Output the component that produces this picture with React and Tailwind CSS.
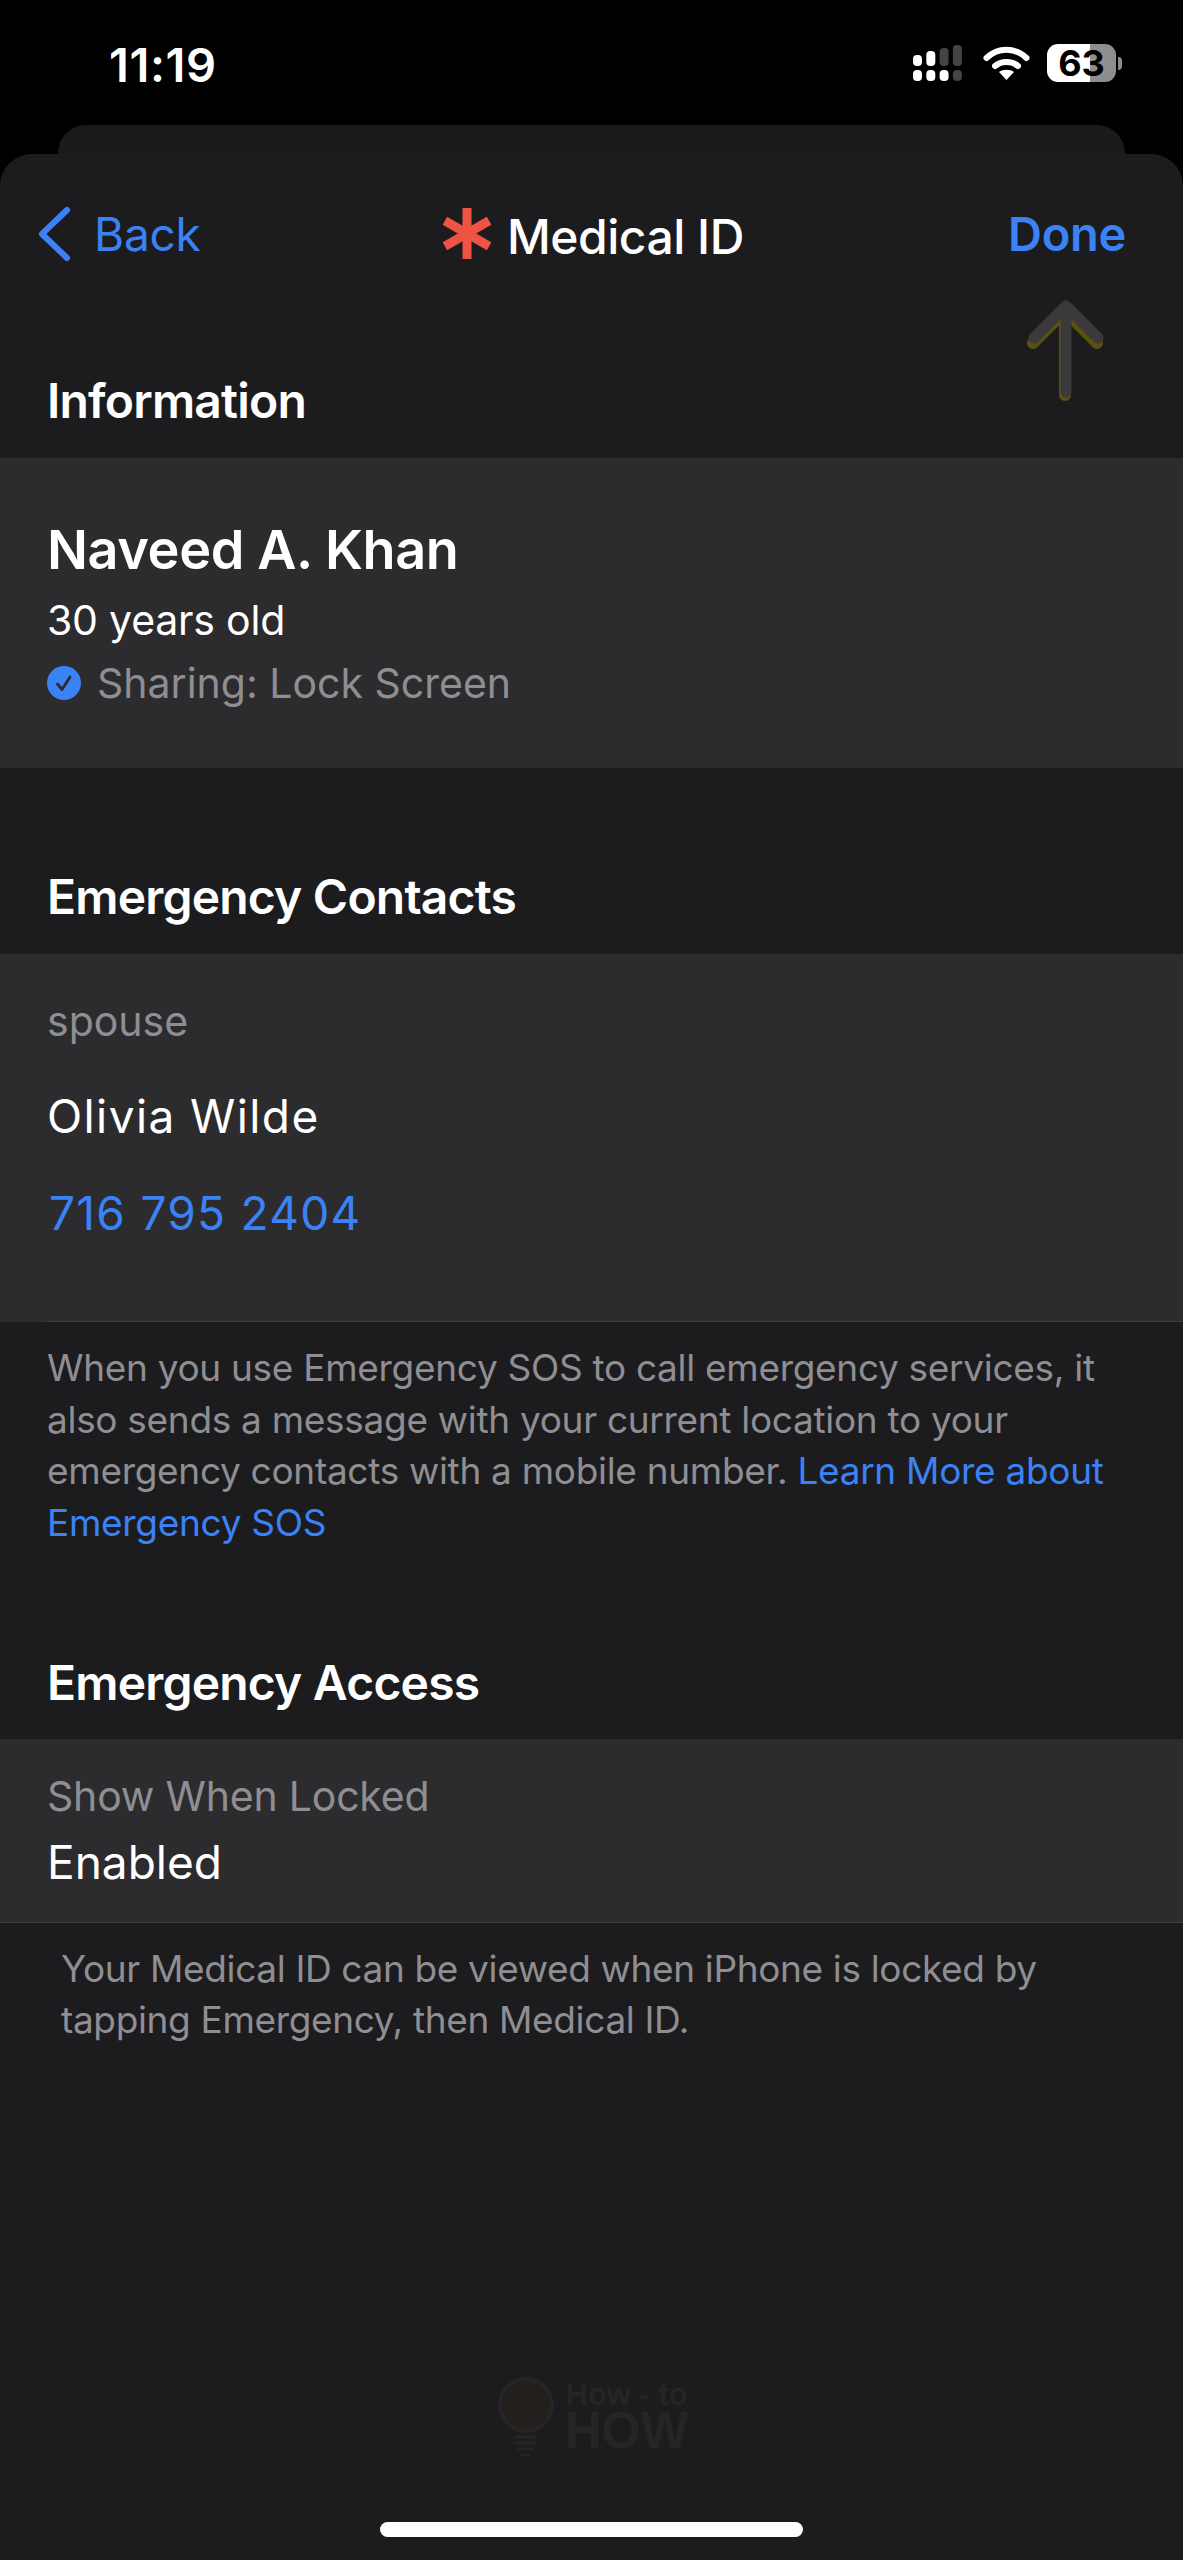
const FONT = "font-['Inter','Liberation_Sans',sans-serif]";

const StatusBar = () => (
  <div className="h-[125px] bg-black flex items-start justify-between pl-[109px] pr-[61px] pt-[40px] shrink-0">
    <span className="text-white text-[47px] leading-[50px] font-semibold tracking-[0.6px]">11:19</span>
    <div className="flex items-center pt-[4px]">
      <svg width="50" height="36" viewBox="0 0 50 36">
        {[0, 1].map((row) =>
          [0, 1, 2, 3].map((col) => {
            const dim = (col === 2 && row === 0) || col === 3;
            const h = row === 0 ? [11, 15, 18, 21][col] : 11;
            const y = row === 0 ? 21 - h : 25;
            return <rect key={`${row}-${col}`} x={col * 13.3} y={y} width="9" height={h} rx="4" fill={dim ? "#444446" : "#fff"} />;
          })
        )}
      </svg>
      <svg className="ml-[20px]" width="47" height="34" viewBox="0 0 47 34" fill="none">
        <path d="M3.5 12C15 1 32 1 43.5 12" stroke="#fff" strokeWidth="6" strokeLinecap="round" />
        <path d="M12 20C18 14.500 29 14.500 35 20" stroke="#fff" strokeWidth="6" strokeLinecap="round" />
        <path d="M23.500 34L16 26C20 23 27 23 31 26Z" fill="#fff" />
      </svg>
      <div className="flex items-center gap-[2px] ml-[17px]">
        <div className="w-[69px] h-[38px] rounded-[11px] bg-[linear-gradient(90deg,#fff_0,#fff_63%,#8e8e90_63%,#8e8e90_100%)] flex items-center justify-center text-black text-[36px] font-bold leading-none">
          63
        </div>
        <div className="w-[4px] h-[13px] rounded-r-full bg-[#8e8e90]" />
      </div>
    </div>
  </div>
);

const SectionTitle = ({ children }) => (
  <h2 className="text-white text-[48px] leading-[52px] font-semibold pl-[47px] tracking-[-0.8px]">{children}</h2>
);

const App = () => {
  return (
    <div className={`w-[1183px] h-[2560px] bg-black overflow-hidden flex flex-col ${FONT}`}>
      <StatusBar />
      <div className="mx-[58px] h-[29px] bg-[#1a1a1c] rounded-t-[28px] shrink-0" />
      <div className="relative flex-1 bg-[#1c1c1e] rounded-t-[32px] flex flex-col">
        <div className="relative h-[150px] flex items-start justify-between pt-[52px] pl-[36px] pr-[57px]">
          <div className="flex items-center gap-[22px] text-[#3b82f6] h-[56px]">
            <svg width="36" height="56" viewBox="0 0 36 56" fill="none">
              <path d="M31 4L6 28L31 52" stroke="#3b82f6" strokeWidth="6" strokeLinecap="round" strokeLinejoin="round" />
            </svg>
            <span className="text-[46px] leading-[56px] tracking-[-0.2px]">Back</span>
          </div>
          <div className="absolute left-[441px] top-[55px] flex items-center gap-[14px]">
            <svg className="-mt-[7px]" width="52" height="51" viewBox="0 0 52 51" fill="#ef5343">
              <rect x="21.500" y="0" width="9" height="51" />
              <rect x="21.500" y="0" width="9" height="51" transform="rotate(60 26 25.500)" />
              <rect x="21.500" y="0" width="9" height="51" transform="rotate(-60 26 25.500)" />
            </svg>
            <span className="text-white text-[48px] leading-[56px] font-medium tracking-[-0.5px]">Medical ID</span>
          </div>
          <span className="text-[#3b82f6] text-[47px] leading-[56px] font-semibold tracking-[-0.3px]">Done</span>
        </div>

        <svg className="absolute left-[1025px] top-[146px]" width="82" height="106" viewBox="0 0 82 106" fill="none">
          <path d="M9 40L41 8L73 40M41 8V92" stroke="#5a5012" strokeWidth="12" strokeLinecap="round" strokeLinejoin="round" transform="translate(-1 3)" />
          <path d="M9 38L41 6L73 38M41 6V92" stroke="#3a3a3c" strokeWidth="11" strokeLinecap="round" strokeLinejoin="round" />
        </svg>

        <div className="pt-[71px]">
          <SectionTitle>Information</SectionTitle>
        </div>
        <section className="mt-[31px] h-[310px] bg-[#2c2c2e] pl-[47px] pt-[61px]">
          <p className="text-white text-[54px] leading-[62px] font-semibold tracking-[-0.4px]">Naveed A. Khan</p>
          <p className="text-white text-[41px] leading-[50px] mt-[14px] tracking-[-0.2px]">30 years old</p>
          <div className="flex items-center gap-[16px] mt-[13px]">
            <svg width="34" height="34" viewBox="0 0 34 34">
              <circle cx="17" cy="17" r="17" fill="#3b82f6" />
              <path d="M10.500 18L15 23.500L23 11" fill="none" stroke="#2c2c2e" strokeWidth="2.800" strokeLinecap="round" strokeLinejoin="round" />
            </svg>
            <span className="text-[#8e8e93] text-[41px] leading-[50px]">Sharing: Lock Screen</span>
          </div>
        </section>

        <div className="pt-[103px]">
          <SectionTitle>Emergency Contacts</SectionTitle>
        </div>
        <section className="mt-[31px] h-[368px] bg-[#2c2c2e] flex flex-col">
          <div className="flex-1 pl-[47px] pt-[42px]">
            <p className="text-[#8e8e93] text-[41px] leading-[50px]">spouse</p>
            <p className="text-white text-[46px] leading-[56px] mt-[42px] tracking-[1.400px]">Olivia Wilde</p>
            <p className="text-[#3b82f6] text-[46px] leading-[56px] mt-[41px] tracking-[1.300px] pl-[2px]">716 795 2404</p>
          </div>
          <div className="ml-[46px] h-px bg-[#3d3d3f]" />
        </section>
        <p className="text-[#8e8e93] text-[37px] leading-[51.5px] pl-[47px] pr-[40px] pt-[20px] tracking-[-0.3px]">
          When you use Emergency SOS to call emergency services, it also sends a message with your current location to your emergency contacts with a mobile number.{" "}
          <span className="text-[#3b82f6]">Learn More about Emergency SOS</span>
        </p>

        <div className="pt-[109px]">
          <SectionTitle>Emergency Access</SectionTitle>
        </div>
        <section className="mt-[30px] h-[184px] bg-[#2c2c2e] border-b border-[#3d3d3f] pl-[47px] pt-[32px]">
          <p className="text-[#8e8e93] text-[41px] leading-[50px] tracking-[-0.2px]">Show When Locked</p>
          <p className="text-white text-[46px] leading-[54px] mt-[14px]">Enabled</p>
        </section>
        <p className="text-[#8e8e93] text-[37px] leading-[51px] pl-[61px] pr-[90px] pt-[20px] tracking-[-0.35px]">
          Your Medical ID can be viewed when iPhone is locked by tapping Emergency, then Medical ID.
        </p>

        <div className="absolute left-[497px] top-[2223px] flex items-center gap-[10px] font-['Liberation_Sans',sans-serif]">
          <svg width="58" height="80" viewBox="0 0 58 80" fill="none">
            <circle cx="29" cy="28" r="26" fill="#231f1c" stroke="#252527" strokeWidth="4" />
            <path d="M18 60H40M18 66H40M21 72H37M24 78H34" stroke="#252527" strokeWidth="3" />
          </svg>
          <div className="flex flex-col items-center font-bold text-[#252527] leading-none">
            <span className="text-[31px] leading-[28px]">How - to</span>
            <span className="text-[51px] leading-[44px] tracking-[-0.5px]">HOW</span>
          </div>
        </div>

        <div className="absolute left-[380px] bottom-[23px] w-[423px] h-[15px] rounded-full bg-white" />
      </div>
    </div>
  );
};

export default App;
